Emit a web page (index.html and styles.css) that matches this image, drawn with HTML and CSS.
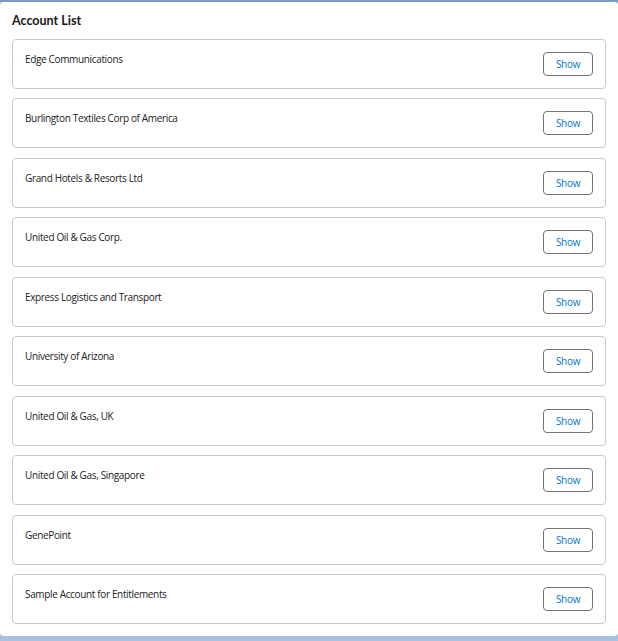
FILE: index.html
```html
<!DOCTYPE html>
<html>
<head>
<meta charset="utf-8">
<link rel="stylesheet" href="styles.css">
</head>
<body>
<div class="page">
  <div class="panel">
    <h1 class="title">Account List</h1>
    <ul class="list">
      <li class="item"><span class="name">Edge Communications</span><button class="btn">Show</button></li>
      <li class="item"><span class="name">Burlington Textiles Corp of America</span><button class="btn">Show</button></li>
      <li class="item"><span class="name">Grand Hotels &amp; Resorts Ltd</span><button class="btn">Show</button></li>
      <li class="item"><span class="name">United Oil &amp; Gas Corp.</span><button class="btn">Show</button></li>
      <li class="item"><span class="name">Express Logistics and Transport</span><button class="btn">Show</button></li>
      <li class="item"><span class="name">University of Arizona</span><button class="btn">Show</button></li>
      <li class="item"><span class="name">United Oil &amp; Gas, UK</span><button class="btn">Show</button></li>
      <li class="item"><span class="name">United Oil &amp; Gas, Singapore</span><button class="btn">Show</button></li>
      <li class="item"><span class="name">GenePoint</span><button class="btn">Show</button></li>
      <li class="item"><span class="name">Sample Account for Entitlements</span><button class="btn">Show</button></li>
    </ul>
  </div>
</div>
</body>
</html>
```

FILE: styles.css
```css
html, body {
  margin: 0;
  padding: 0;
  height: 100%;
}
body {
  background: #a9c0de;
  font-family: "Open Sans", "Noto Sans", sans-serif;
  color: #181818;
}
.page {
  height: 641px;
  box-sizing: border-box;
  padding-top: 2px;
  background: linear-gradient(#7b9cc7 0, #7b9cc7 2px, #a9c0de 2px);
}
.panel {
  background: #fff;
  border-radius: 4px;
  height: 634px;
  box-sizing: border-box;
  padding: 10px 12px 0 12px;
}
.title {
  margin: 0 0 9px 0;
  font-family: Lato, "Open Sans", sans-serif;
  font-size: 12.5px;
  font-weight: 700;
  line-height: 18px;
  color: #181818;
}
.list {
  list-style: none;
  margin: 0;
  padding: 0;
  display: flex;
  flex-direction: column;
  gap: 9.44px;
}
.item {
  height: 50px;
  box-sizing: border-box;
  border: 1px solid #c9c9c9;
  border-radius: 4px;
  display: flex;
  justify-content: space-between;
  align-items: center;
  padding: 0 12px 0 12px;
}
.name {
  align-self: flex-start;
  margin-top: 12px;
  font-size: 10px;
  letter-spacing: -0.35px;
  line-height: 14px;
  color: #222;
}
.btn {
  width: 50px;
  height: 24px;
  border: 1px solid #747474;
  border-radius: 4px;
  background: #fff;
  color: #0176d3;
  font-family: "Open Sans", "Noto Sans", sans-serif;
  font-size: 10px;
  letter-spacing: -0.3px;
  padding: 0;
}
```
